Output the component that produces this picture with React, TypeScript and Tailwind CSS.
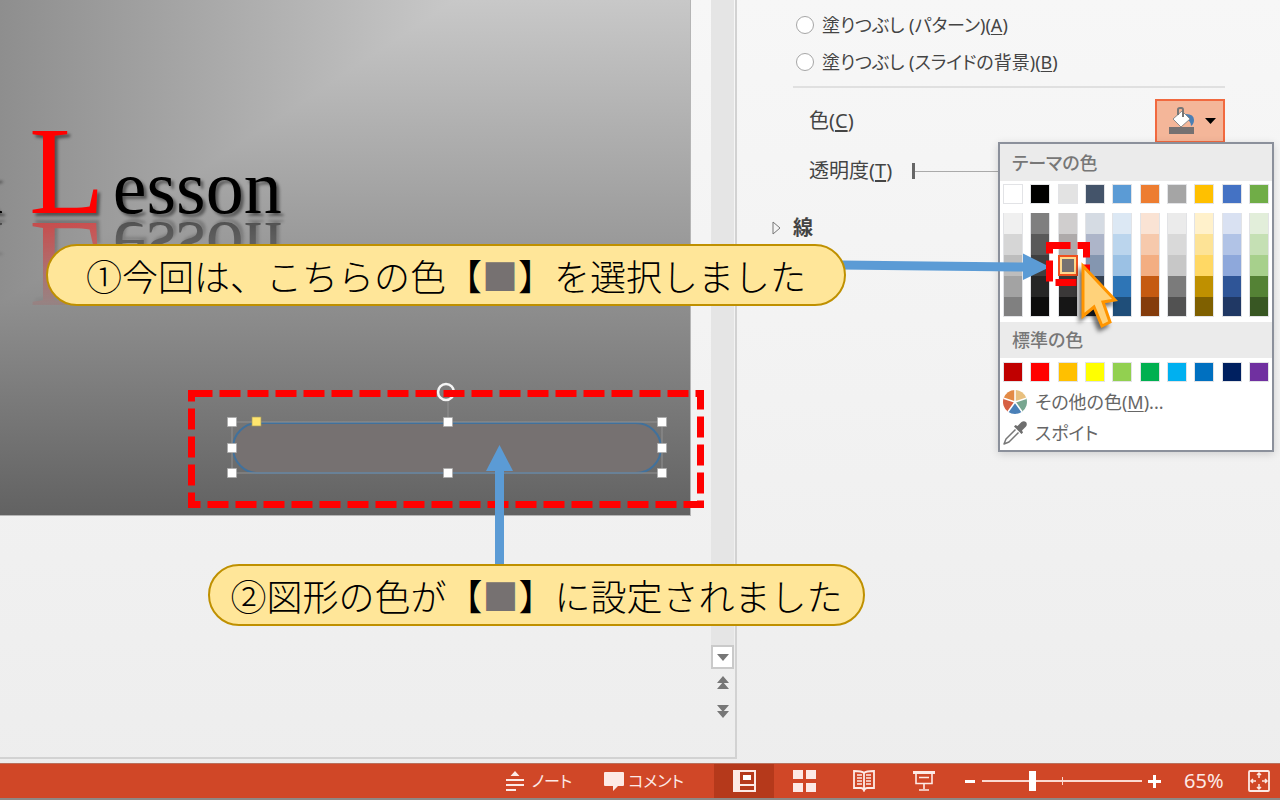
import { useState } from 'react'

const themeColors = [
  { base: 'bg-white', shades: ['bg-[#f0f0f0]', 'bg-[#d6d6d6]', 'bg-[#bdbdbd]', 'bg-[#a3a3a3]', 'bg-[#808080]'] },
  { base: 'bg-black', shades: ['bg-[#7f7f7f]', 'bg-[#595959]', 'bg-[#3f3f3f]', 'bg-[#262626]', 'bg-[#0c0c0c]'] },
  { base: 'bg-[#e3e3e3]', shades: ['bg-[#d0cece]', 'bg-[#aeaaaa]', 'bg-[#767171]', 'bg-[#3a3838]', 'bg-[#161616]'] },
  { base: 'bg-[#44546a]', shades: ['bg-[#d5dbe3]', 'bg-[#adb5c9]', 'bg-[#8496b0]', 'bg-[#333f50]', 'bg-[#222a35]'] },
  { base: 'bg-[#5b9bd5]', shades: ['bg-[#dce8f4]', 'bg-[#bbd5ed]', 'bg-[#9bc1e4]', 'bg-[#2e75b6]', 'bg-[#1f4e79]'] },
  { base: 'bg-[#ed7d31]', shades: ['bg-[#fae3d4]', 'bg-[#f6c9ac]', 'bg-[#f3ae82]', 'bg-[#c55a11]', 'bg-[#843c0c]'] },
  { base: 'bg-[#a5a5a5]', shades: ['bg-[#ebebeb]', 'bg-[#d9d9d9]', 'bg-[#c7c7c7]', 'bg-[#7b7b7b]', 'bg-[#525252]'] },
  { base: 'bg-[#ffc000]', shades: ['bg-[#fff1cb]', 'bg-[#fde396]', 'bg-[#ffd864]', 'bg-[#bf9000]', 'bg-[#7f6000]'] },
  { base: 'bg-[#4472c4]', shades: ['bg-[#d9e1f2]', 'bg-[#b1c3e6]', 'bg-[#8ea8db]', 'bg-[#2f5597]', 'bg-[#203864]'] },
  { base: 'bg-[#70ad47]', shades: ['bg-[#e2eeda]', 'bg-[#c5e0b4]', 'bg-[#a7d08c]', 'bg-[#548235]', 'bg-[#385723]'] },
]

const standardColors = [
  'bg-[#c00000]',
  'bg-[#ff0000]',
  'bg-[#ffc000]',
  'bg-[#ffff00]',
  'bg-[#92d050]',
  'bg-[#00b050]',
  'bg-[#00b0f0]',
  'bg-[#0070c0]',
  'bg-[#002060]',
  'bg-[#7030a0]',
]

const handles = [
  [232, 422], [448, 422], [662, 422],
  [232, 448], [662, 448],
  [232, 473], [448, 473], [662, 473],
]

function Callout({ className, before, after }: { className: string; before: string; after: string }) {
  return (
    <p
      className={`absolute flex h-[62px] items-center justify-center rounded-full border-2 border-[#bf9000] bg-[#ffe699] font-['Noto_Sans_CJK_JP',sans-serif] text-[36px] leading-none font-light whitespace-nowrap text-black ${className}`}
    >
      <span>
        {before}【<span className="text-[#767171]">■</span>】{after}
      </span>
    </p>
  )
}

function Slide() {
  return (
    <div className="relative mr-5 h-[516px] overflow-hidden border-r border-b border-[#b5b5b5] bg-[linear-gradient(to_right,#8e8e8e,#c8c8c8_66%),linear-gradient(to_bottom,#c8c8c8,#8b8b8b_62%,#626262)] bg-blend-darken">
      <h1 className="-ml-9 pt-[100px] font-['Liberation_Serif',serif] text-[76px] leading-[144px] whitespace-nowrap text-black [-webkit-box-reflect:below_-82px_linear-gradient(transparent_45%,rgba(0,0,0,0.7))] [text-shadow:3px_3px_3px_rgba(0,0,0,0.45)]">
        k <span className="ml-2 text-[124px] text-[#ff0000]">L</span>
        <span className="ml-2">esson</span>
      </h1>

      {/* Selected shape */}
      <svg className="absolute top-0 left-0" width="690" height="515" fill="none">
        <rect x="233" y="423" width="428" height="50" rx="25" fill="#767171" stroke="#41719c" strokeWidth="2" />
        <path d="M232 422H662V473H232ZM448 400V422" stroke="#929292" />
        <circle cx="446" cy="392" r="8" stroke="#f5f5f5" strokeWidth="2.5" />
        {handles.map(([x, y]) => (
          <rect key={`${x}-${y}`} x={x - 4.5} y={y - 4.5} width="9" height="9" fill="#fff" stroke="#a8a8a8" strokeWidth="0.7" />
        ))}
        <rect x="252" y="417" width="9" height="9" fill="#ffe56e" stroke="#a59a60" strokeWidth="0.7" />
      </svg>
    </div>
  )
}

function ColorMenu() {
  return (
    <div className="absolute top-[43px] -right-[49px] z-10 w-[276px] border-2 border-[#8b909b] bg-white pb-[2px] text-[#666] shadow-[0_2px_8px_rgba(0,0,0,0.15)]">
      <h3 className="flex h-[37px] items-center bg-[#ebebeb] px-3 text-[18px] font-medium text-[#777]">テーマの色</h3>
      <div className="flex justify-between px-[3px] pt-[3px] pb-[5px]">
        {themeColors.map((column, col) => (
          <div key={column.base} className="flex w-5 flex-col">
            <button aria-label={`テーマの色 ${col + 1}`} className={`mb-[9px] h-5 border border-[#e2e3e6] ${column.base}`} />
            {column.shades.map((shade, row) => (
              <button
                key={shade}
                aria-label={`テーマの色 ${col + 1}-${row + 1}`}
                className={
                  col === 2 && row === 2
                    ? `h-[21px] border-2 border-[#f0501e] outline-2 -outline-offset-4 outline-[#ffd98c] ${shade}`
                    : `h-[21px] border-x border-[#e2e3e6] last:h-5 last:border-b ${shade}`
                }
              />
            ))}
          </div>
        ))}
      </div>
      <h3 className="flex h-9 items-center bg-[#ebebeb] px-3 text-[18px] font-medium text-[#777]">標準の色</h3>
      <div className="flex justify-between px-[3px] py-1">
        {standardColors.map((color, i) => (
          <button key={color} aria-label={`標準の色 ${i + 1}`} className={`size-5 border border-[#e2e3e6] ${color}`} />
        ))}
      </div>
      <button className="flex h-[31px] w-full items-center gap-2 px-[3px] text-[18px]">
        <svg width="24" height="24" viewBox="-12 -12 24 24">
          <path d="M0 0V-12A12 12 0 0 1 11.4 -3.7Z" fill="#e8c07f" />
          <path d="M0 0L11.4 -3.7A12 12 0 0 1 7 9.7Z" fill="#78a690" />
          <path d="M0 0L7 9.7A12 12 0 0 1 -7 9.7Z" fill="#4a80b8" />
          <path d="M0 0L-7 9.7A12 12 0 0 1 -11.4 -3.7Z" fill="#d65f43" />
          <path d="M0 0L-11.4 -3.7A12 12 0 0 1 0 -12Z" fill="#e38a45" />
          <path d="M0 0V-12M0 0L11.4 -3.7M0 0L7 9.7M0 0L-7 9.7M0 0L-11.4 -3.7" stroke="#fff" strokeWidth="1.5" />
        </svg>
        <span>
          その他の色(<u className="underline-offset-2">M</u>)...
        </span>
      </button>
      <button className="flex h-[31px] w-full items-center gap-2 px-[3px] text-[18px]">
        <svg width="24" height="24" viewBox="0 0 24 24" fill="none">
          <path d="M12.5 8.5L3 18L1 23L6 21L15.5 11.5" fill="#fff" stroke="#777" strokeWidth="1.5" strokeLinejoin="round" />
          <path d="M11 5.5L12.5 4L14.5 5L18.5 1Q21 -.5 23.2 1.2Q24.5 3.5 23 5.5L19 9.5L20 11.5L18.5 13Z" fill="#6e6e6e" />
        </svg>
        <span>スポイト</span>
      </button>
    </div>
  )
}

function FormatPane() {
  const [fill, setFill] = useState('')

  const fillTypes = [
    { id: 'picture', name: '図またはテクスチャ', shortcut: 'P' },
    { id: 'pattern', name: 'パターン', shortcut: 'A' },
    { id: 'slide', name: 'スライドの背景', shortcut: 'B' },
  ]

  return (
    <aside className="w-[543px] shrink-0 pr-[55px] pl-14 font-['Noto_Sans','Noto_Sans_CJK_JP',sans-serif] leading-none text-[#444] [font-feature-settings:'palt']">
      <div className="-mt-[31px] pl-[3px]">
        {fillTypes.map((type) => (
          <label key={type.id} className="flex h-[37px] items-center gap-2 text-[18px] whitespace-nowrap">
            <input
              type="radio"
              name="fill"
              checked={fill === type.id}
              onChange={() => setFill(type.id)}
              className="size-[18px] appearance-none rounded-full border border-[#a6a6a6] bg-white checked:border-4 checked:border-[#555]"
            />
            <span>
              塗りつぶし ({type.name})(<u className="underline-offset-2">{type.shortcut}</u>)
            </span>
          </label>
        ))}
      </div>
      <hr className="mt-[6px] border-t-2 border-[#e0e0e0]" />

      <div className="mt-[11px] flex items-center justify-between pl-4 text-[20px]">
        <span>
          色(<u className="underline-offset-2">C</u>)
        </span>
        <div className="relative">
          <button aria-label="色" className="flex h-11 w-[70px] items-center gap-[10px] border-2 border-[#f1693f] bg-[#f4b699] pl-3">
            <svg width="26" height="28" viewBox="0 0 26 28" fill="none">
              <path d="M17 7Q25 7 25 13Q25 17 22 19Q22 14 17 12Z" fill="#4a7fb5" />
              <path d="M4 12L13 4L21 12L12 20Z" fill="#fff" stroke="#8a8a8a" />
              <path d="M9 8V2.5Q9 1 11 1H12.5Q14 1 14 3V10" stroke="#777" strokeWidth="2" />
              <path d="M0 20H25V27H0Z" fill="#767171" />
            </svg>
            <svg width="11" height="7">
              <path d="M0 0H11L5.5 6Z" fill="#000" />
            </svg>
          </button>
          <ColorMenu />
        </div>
      </div>

      <div className="mt-[6px] flex h-11 items-center gap-5 pl-4 text-[20px]">
        <label htmlFor="transparency" className="whitespace-nowrap">
          透明度(<u className="underline-offset-2">T</u>)
        </label>
        <input
          id="transparency"
          type="range"
          defaultValue={0}
          className="h-4 w-[120px] appearance-none bg-[linear-gradient(#aaa,#aaa)] bg-[length:100%_1px] bg-center bg-no-repeat [&::-webkit-slider-thumb]:h-4 [&::-webkit-slider-thumb]:w-[3px] [&::-webkit-slider-thumb]:appearance-none [&::-webkit-slider-thumb]:bg-[#666]"
        />
      </div>

      <button className="mt-6 -ml-[21px] flex h-[22px] items-center gap-3 text-[20px] font-bold">
        <svg width="9" height="14" fill="none">
          <path d="M1 1L8 7L1 13Z" stroke="#777" />
        </svg>
        線
      </button>
    </aside>
  )
}

function ScrollBar() {
  return (
    <div className="flex w-[23px] flex-col">
      <div className="h-[645px] bg-[#e5e5e5]" />
      <button aria-label="下へスクロール" className="flex h-6 items-center justify-center border-2 border-[#cacaca] bg-white">
        <svg width="12" height="7">
          <path d="M0 0H12L6 7Z" fill="#777" />
        </svg>
      </button>
      <button aria-label="前のスライド" className="flex h-7 items-center justify-center">
        <svg width="12" height="14">
          <path d="M6 0L12 7H0ZM6 6L12 13H0Z" fill="#777" />
        </svg>
      </button>
      <button aria-label="次のスライド" className="flex h-7 items-center justify-center">
        <svg width="12" height="14">
          <path d="M0 1H12L6 8ZM0 7H12L6 14Z" fill="#777" />
        </svg>
      </button>
    </div>
  )
}

function StatusBar() {
  return (
    <footer className="flex h-[37px] shrink-0 items-center justify-end border-t border-b-2 border-t-[#b9705c] border-b-[#8e8885] bg-[#d04727] pr-[10px] font-['Noto_Sans','Noto_Sans_CJK_JP',sans-serif] text-[16px] leading-none text-[#fdeae6] [font-feature-settings:'palt']">
      <button className="mr-8 flex items-center gap-2">
        <svg width="18" height="21" fill="currentColor">
          <path d="M9 0L13.5 5H4.5ZM0 8H18V10H0ZM0 13H18V15H0ZM0 18H10V20H0Z" />
        </svg>
        ノート
      </button>
      <button className="mr-[30px] flex items-center gap-1">
        <svg width="20" height="21" fill="currentColor">
          <path d="M1 1H19Q20 1 20 2V14Q20 15 19 15H14L9 20V15H1Q0 15 0 14V2Q0 1 1 1Z" />
        </svg>
        コメント
      </button>

      <button aria-label="標準" className="flex h-full w-15 items-center justify-center bg-[#b5391b]">
        <svg width="23" height="22" fill="none">
          <path d="M0 0H23V22H0ZM7 2V14H21V2ZM7 16V20H21V16Z" fill="currentColor" fillRule="evenodd" />
          <path d="M10 5H18V10H10Z" fill="#fff" />
        </svg>
      </button>
      <button aria-label="スライド一覧" className="flex h-full w-15 items-center justify-center">
        <svg width="23" height="22" fill="currentColor">
          <path d="M0 0H10V9H0ZM13 0H23V9H13ZM0 13H10V22H0ZM13 13H23V22H13Z" />
        </svg>
      </button>
      <button aria-label="閲覧表示" className="flex h-full w-15 items-center justify-center">
        <svg width="22" height="22" fill="none" stroke="currentColor">
          <path d="M11 3Q9 1 1 1V18H8Q10 18 11 20.5Q12 18 14 18H21V1Q13 1 11 3V20" strokeWidth="1.8" />
          <path d="M4 5H9M4 8H9M4 11H9M4 14H9M13 5H18M13 8H18M13 11H18M13 14H18" strokeWidth="1.5" />
        </svg>
      </button>
      <button aria-label="スライドショー" className="flex h-full w-15 items-center justify-center">
        <svg width="22" height="20" fill="none" stroke="currentColor">
          <path d="M0 1.5H22" strokeWidth="3" />
          <path d="M3 3V12.5H19V3M11 13V18M6 19H16M6 6.5H16" strokeWidth="1.6" />
        </svg>
      </button>

      <button aria-label="縮小" className="ml-1 flex h-full w-6 items-center justify-center text-white">
        <svg width="10" height="3" fill="currentColor">
          <path d="M0 0H10V3H0Z" />
        </svg>
      </button>
      <div className="relative flex items-center">
        <input
          type="range"
          aria-label="ズーム"
          defaultValue={31}
          className="h-5 w-40 appearance-none bg-[linear-gradient(#fbd9d0,#fbd9d0)] bg-[length:100%_2px] bg-center bg-no-repeat [&::-webkit-slider-thumb]:h-5 [&::-webkit-slider-thumb]:w-[7px] [&::-webkit-slider-thumb]:appearance-none [&::-webkit-slider-thumb]:bg-white"
        />
        <span className="absolute left-1/2 h-2 w-px bg-[#fbd9d0]" />
      </div>
      <button aria-label="拡大" className="flex h-full w-6 items-center justify-center text-white">
        <svg width="13" height="13" fill="currentColor">
          <path d="M5 0H8V5H13V8H8V13H5V8H0V5H5Z" />
        </svg>
      </button>
      <button className="mr-[22px] ml-[18px] w-[42px] text-left text-[20px]">65%</button>
      <button aria-label="ウィンドウに合わせる" className="flex h-full items-center">
        <svg width="22" height="22" fill="none" stroke="currentColor" strokeWidth="1.8">
          <rect x="1" y="1" width="20" height="20" rx="1" />
          <path d="M11 3V8M9 5L11 3L13 5M11 19V14M9 17L11 19L13 17M3 11H8M5 9L3 11L5 13M19 11H14M17 9L19 11L17 13" strokeWidth="1.5" />
        </svg>
      </button>
    </footer>
  )
}

export default function App() {
  return (
    <div className="relative flex min-h-screen flex-col overflow-hidden bg-linear-to-b from-[#f7f7f7] to-[#ededed]">
      <div className="flex flex-1">
        <main className="mb-1 flex min-w-0 flex-1 border-r-2 border-b-2 border-[#d2d2d2] pr-px">
          <div className="min-w-0 flex-1">
            <Slide />
          </div>
          <ScrollBar />
        </main>
        <FormatPane />
      </div>
      <StatusBar />

      {/* Step annotations */}
      <svg className="pointer-events-none absolute top-0 left-0 z-20" width="1280" height="640" fill="none">
        <path d="M191.500 393.500H700.500V504.500H191.500Z" stroke="#ff0000" strokeWidth="7" strokeDasharray="21 7" />
        <path d="M495 564V471H486L499.500 445L513 471H504V564Z" fill="#5b9bd5" />
        <path d="M840 260.500L1023 262.500V253.500L1050 267L1023 280V271.500L840 269.500Z" fill="#5b9bd5" />
        <path d="M1049.500 245.500H1086.500V282.500H1049.500Z" stroke="#ff0000" strokeWidth="7" strokeDasharray="21 7" />
        <path
          d="M1083 266L1115 300L1103 302L1110 322L1102 326L1094 307L1083 316Z"
          fill="#ffd27a"
          stroke="#ff9500"
          strokeWidth="3"
          className="drop-shadow-[-3px_4px_2px_rgba(0,0,0,0.55)]"
        />
      </svg>
      <Callout className="top-[244px] left-[46px] z-20 w-[800px]" before="①今回は、こちらの色" after="を選択しました" />
      <Callout className="top-[564px] left-[208px] z-20 w-[657px]" before="②図形の色が" after="に設定されました" />
    </div>
  )
}
